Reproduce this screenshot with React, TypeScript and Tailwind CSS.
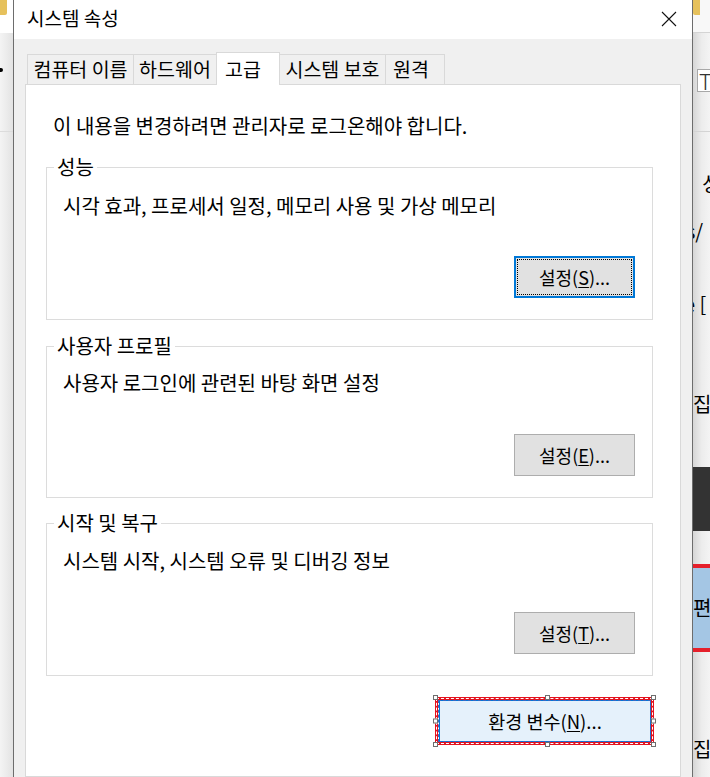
import { ReactNode } from 'react'

function Tab({ label, width, active }: { label: string; width: string; active?: boolean }) {
  if (active) {
    return (
      <div className={`relative z-10 -mb-px -ml-px h-[33px] ${width} border border-b-0 border-[#d9d9d9] bg-white pl-[8px] pt-[4px] leading-[24px]`}>
        {label}
      </div>
    )
  }
  return (
    <div className={`-ml-px h-[30px] ${width} border border-b-0 border-[#d9d9d9] bg-[#f0f0f0] pt-[2px] text-center leading-[24px] first:ml-0`}>
      {label}
    </div>
  )
}

function SettingsButton({ mnemonic, focused }: { mnemonic: string; focused?: boolean }) {
  return (
    <button
      className={`relative h-[42px] w-[121px] bg-[#e1e1e1] text-[18px] leading-[24px] text-black ${
        focused ? 'border-2 border-[#0078d7]' : 'border border-[#adadad]'
      }`}
    >
      {focused && <span className="absolute inset-[1px] border border-dotted border-black" />}
      설정(<span className="underline underline-offset-2">{mnemonic}</span>)...
    </button>
  )
}

interface GroupBoxProps {
  title: string
  text: string
  textGap: string
  className?: string
  children: ReactNode
}

function GroupBox({ title, text, textGap, className = '', children }: GroupBoxProps) {
  return (
    <fieldset className={`border border-[#dcdcdc] pb-[21px] ${className}`}>
      <legend className="ml-[7px] px-[3px] leading-[24px]">{title}</legend>
      <div className="pl-[16px] pr-[17px]">
        <p className={`${textGap} leading-[24px]`}>{text}</p>
        <div className="flex justify-end">{children}</div>
      </div>
    </fieldset>
  )
}

function Handle({ pos }: { pos: string }) {
  return <span className={`absolute h-[5px] w-[5px] border border-[#6e6e6e] bg-white ${pos}`} />
}

export default function App() {
  return (
    <div className="flex h-[777px] w-[710px] overflow-hidden bg-white font-['Noto_Sans_CJK_KR','Liberation_Sans',sans-serif] text-[20px] text-black">
      {/* background window, left side */}
      <div className="flex w-[13px] shrink-0 flex-col bg-gradient-to-r from-[#f4f4f4] to-[#e3e3e3]">
        <div className="h-[33px] bg-white">
          <div className="h-[15px] w-[7px] rounded-br-[2px] bg-[#e6c15c]" />
        </div>
        <div className="h-[99px] border-b border-[#dcdcdc] pt-[35px]">
          <div className="h-[4px] w-[3px] rounded-r-full bg-black" />
        </div>
      </div>

      {/* dialog */}
      <div className="flex h-full w-[680px] shrink-0 flex-col border-x border-[#6d6d6d] bg-[#f0f0f0]">
        <div className="flex h-[39px] shrink-0 items-center justify-between bg-white pb-[4px] pl-[13px] pr-[15px]">
          <span className="text-[19px] leading-[24px]">시스템 속성</span>
          <svg width="16" height="16" viewBox="0 0 16 16" className="mt-[3px]">
            <path d="M1 1 L15 15 M15 1 L1 15" stroke="#111" strokeWidth="1.1" fill="none" />
          </svg>
        </div>

        <div className="flex flex-1 flex-col px-[11px] pt-[13px]">
          <div className="flex h-[32px] items-end pl-[2px] text-[19.5px]">
            <Tab label="컴퓨터 이름" width="w-[107px]" />
            <Tab label="하드웨어" width="w-[84px]" />
            <Tab label="고급" width="w-[64px]" active />
            <Tab label="시스템 보호" width="w-[107px]" />
            <div className="-ml-px h-[30px] w-[60px] border border-b-0 border-[#d9d9d9] bg-[#f0f0f0] pl-[7px] pt-[2px] leading-[24px]">
              원격
            </div>
          </div>

          <div className="flex flex-1 flex-col border border-[#d9d9d9] bg-white pl-[20px] pr-[27px] pt-[29px]">
            <p className="ml-[7px] leading-[24px]">이 내용을 변경하려면 관리자로 로그온해야 합니다.</p>

            <GroupBox title="성능" text="시각 효과, 프로세서 일정, 메모리 사용 및 가상 메모리" textGap="mt-[15px] mb-[38px]" className="mt-[17px]">
              <SettingsButton mnemonic="S" focused />
            </GroupBox>

            <GroupBox title="사용자 프로필" text="사용자 로그인에 관련된 바탕 화면 설정" textGap="mt-[13px] mb-[39px]" className="mt-[14px]">
              <SettingsButton mnemonic="E" />
            </GroupBox>

            <GroupBox title="시작 및 복구" text="시스템 시작, 시스템 오류 및 디버깅 정보" textGap="mt-[14px] mb-[39px]" className="mt-[13px]">
              <SettingsButton mnemonic="T" />
            </GroupBox>

            <div className="mt-[24px] flex justify-end pr-[2px]">
              <div className="relative">
                <button className="h-[42px] w-[212px] border border-[#0078d7] bg-[#e5f1fb] text-[18.5px] leading-[24px] text-black">
                  환경 변수(<span className="underline underline-offset-2">N</span>)...
                </button>
                {/* selection marker lying over the button */}
                <div className="pointer-events-none absolute -bottom-[3px] -left-[4px] -right-[3px] -top-[3px] border-[3px] border-[#e3131f]">
                  <div className="absolute inset-[-2px] border border-dashed border-white" />
                  <div className="absolute inset-0 border border-dashed border-[#3a66c4]" />
                  <Handle pos="-left-[5px] -top-[5px]" />
                  <Handle pos="left-1/2 -top-[5px]" />
                  <Handle pos="-right-[5px] -top-[5px]" />
                  <Handle pos="-left-[5px] top-1/2 -translate-y-1/2" />
                  <Handle pos="-right-[5px] top-1/2 -translate-y-1/2" />
                  <Handle pos="-bottom-[5px] -left-[5px]" />
                  <Handle pos="-bottom-[5px] left-1/2" />
                  <Handle pos="-bottom-[5px] -right-[5px]" />
                </div>
              </div>
            </div>
          </div>
        </div>
      </div>

      {/* background window, right side */}
      <div className="flex w-[17px] shrink-0 flex-col overflow-hidden whitespace-nowrap bg-gradient-to-r from-[#d6d6d6] via-[#ececec] to-[#f4f4f4]">
        <div className="h-[33px] shrink-0 border-b border-[#d4d4d4] bg-[#f8f8f8]">
          <div className="h-[15px] w-[7px] rounded-bl-[2px] bg-[#e6c15c]" />
        </div>
        <div className="h-[99px] shrink-0 border-b border-[#d4d4d4] pt-[36px]">
          <div className="ml-[4px] h-[23px] border border-r-0 border-[#a8a8a8] bg-white pl-[1px] text-[22px] font-light leading-[21px] text-[#333]">T</div>
        </div>
        <div className="h-[335px] shrink-0 leading-[24px]">
          <div className="ml-[9px] mt-[40px]">싱</div>
          <div className="-ml-[7px] mt-[23px]">s/</div>
          <div className="-ml-[9px] mt-[49px]">e [</div>
          <div className="ml-[0px] mt-[76px]">집</div>
        </div>
        <div className="h-[64px] shrink-0 bg-[#333333]" />
        <div className="h-[33px] shrink-0" />
        <div className="flex h-[88px] shrink-0 flex-col justify-center border-y-4 border-[#e5202b] bg-[#a4c6e4] leading-[24px]">
          <span>편지</span>
        </div>
        <div className="shrink-0 pt-[85px] leading-[24px]">집</div>
      </div>
    </div>
  )
}
